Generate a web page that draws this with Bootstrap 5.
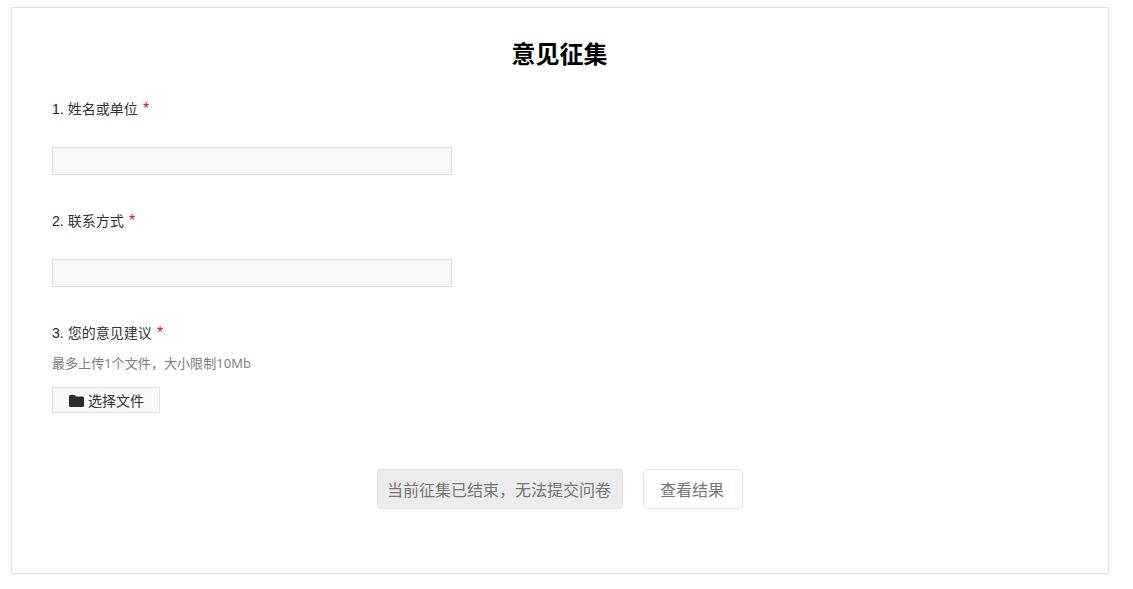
<!DOCTYPE html>
<html lang="zh-CN">
<head>
<meta charset="utf-8">
<title>意见征集</title>
<link href="https://cdn.jsdelivr.net/npm/bootstrap@5.3.0/dist/css/bootstrap.min.css" rel="stylesheet">
<style>
html, body { background: #fff; }
body { font-family: "Noto Sans CJK SC", "Liberation Sans", sans-serif; font-size: 14px; color: #212529; padding: 7px 24px 15px 11px; overflow: hidden; }
.survey-shell { border: 1px solid #e2e2e2; height: 567px; padding: 30px 40px 0; }
.survey-title { font-size: 24px; font-weight: 700; line-height: 30px; color: #000; margin: 0 1px 30px 0; }
.q-label { font-size: 14px; line-height: 20px; margin: 0; color: #333; }
.q-num { font-family: "Liberation Sans", sans-serif; font-size: 14px; color: #212529; margin-right: 1px; }
.q-req { color: #c9151e; margin-left: 2px; font-family: "Liberation Sans", sans-serif; font-size: 16px; line-height: 1; }
.q-input { display: block; width: 400px; height: 28px; margin-top: 28px; margin-bottom: 35px; background: #f8f9fa; border: 1px solid #dee2e6; border-radius: 0; padding: 0 8px; }
.q-hint { font-family: "Open Sans", "Noto Sans CJK SC", sans-serif; font-size: 13px; letter-spacing: .06px; line-height: 20px; color: #7b7b7b; margin-top: 10px; }
.file-btn { width: 108px; height: 26px; margin-top: 14px; background: #f8f9fa; border: 1px solid #dee2e6; border-radius: 0; font-size: 14px; line-height: 1; color: #333; padding: 0; gap: 5px; }
.file-btn svg { margin-left: 1px; margin-right: -1px; margin-top: 1px; }
.action-row { margin-top: 56px; gap: 20px; }
.act-btn { height: 40px; font-size: 16px; line-height: 1; color: #757575; border-radius: 4px; padding: 0 2px 0 0; }
.act-closed { width: 246px; background: #ececec; border: 1px solid #e3e3e3; }
.act-closed:disabled { background: #ececec; border-color: #e3e3e3; color: #757575; opacity: 1; }
.act-view { width: 100px; background: #fff; border: 1px solid #e4e4e4; }
</style>
</head>
<body>
<main class="survey-shell">
  <h1 class="survey-title text-center">意见征集</h1>
  <form>
    <div>
      <label class="q-label d-block" for="f1"><span class="q-num">1.</span> 姓名或单位 <span class="q-req">*</span></label>
      <input id="f1" class="q-input" type="text">
    </div>
    <div>
      <label class="q-label d-block" for="f2"><span class="q-num">2.</span> 联系方式 <span class="q-req">*</span></label>
      <input id="f2" class="q-input" type="text">
    </div>
    <div>
      <div class="q-label"><span class="q-num">3.</span> 您的意见建议 <span class="q-req">*</span></div>
      <div class="q-hint">最多上传1个文件，大小限制10Mb</div>
      <button type="button" class="btn file-btn d-inline-flex align-items-center justify-content-center">
        <svg width="15" height="12" viewBox="0 0 15 12" aria-hidden="true"><path fill="#2b2b2b" d="M1.5 0H5.6L7 1.6H13.5A1.5 1.5 0 0 1 15 3.1V10.5A1.5 1.5 0 0 1 13.5 12H1.5A1.5 1.5 0 0 1 0 10.5V1.5A1.5 1.5 0 0 1 1.5 0Z"/></svg>
        选择文件
      </button>
    </div>
    <div class="action-row d-flex justify-content-center">
      <button type="button" class="btn act-btn act-closed" disabled>当前征集已结束，无法提交问卷</button>
      <button type="button" class="btn act-btn act-view">查看结果</button>
    </div>
  </form>
</main>
<script src="https://cdn.jsdelivr.net/npm/bootstrap@5.3.0/dist/js/bootstrap.bundle.min.js"></script>
</body>
</html>
